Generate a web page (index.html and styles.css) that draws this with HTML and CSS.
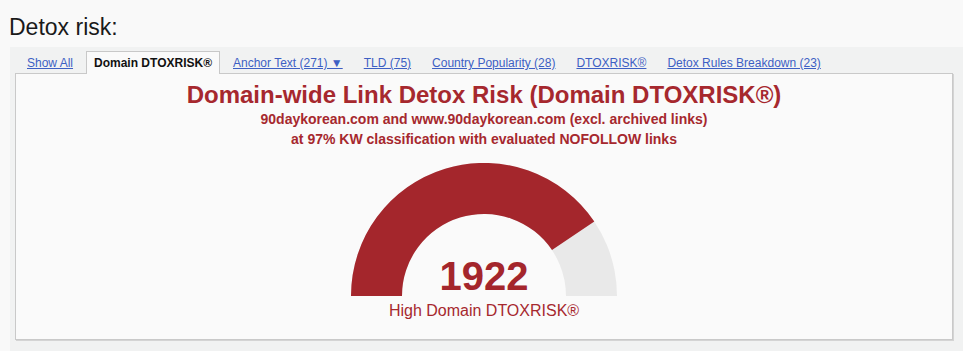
FILE: index.html
```html
<!DOCTYPE html>
<html lang="en">
<head>
<meta charset="utf-8">
<title>Detox risk</title>
<link rel="stylesheet" href="styles.css">
</head>
<body>
<h1 class="page-title">Detox risk:</h1>
<div class="tabs-box">
  <ul class="tab-bar">
    <li class="tab"><a href="#">Show All</a></li>
    <li class="tab active">Domain DTOXRISK®</li>
    <li class="tab"><a href="#">Anchor Text (271) ▼</a></li>
    <li class="tab"><a href="#">TLD (75)</a></li>
    <li class="tab"><a href="#">Country Popularity (28)</a></li>
    <li class="tab"><a href="#">DTOXRISK®</a></li>
    <li class="tab"><a href="#">Detox Rules Breakdown (23)</a></li>
  </ul>
  <div class="panel">
    <h2 class="chart-title">Domain-wide Link Detox Risk (Domain DTOXRISK®)</h2>
    <p class="chart-sub">90daykorean.com and www.90daykorean.com (excl. archived links)<br>at 97% KW classification with evaluated NOFOLLOW links</p>
    <div class="gauge">
      <svg class="gauge-svg" width="266" height="134" viewBox="0 0 266 134">
        <path d="M0 133 A133 133 0 0 1 266 133 L215 133 A82 82 0 0 0 51 133 Z" fill="#e9e9e9"/>
        <path d="M0 133 A133 133 0 0 1 243.3 58.6 L201 87.1 A82 82 0 0 0 51 133 Z" fill="#a4262c"/>
        <text x="133" y="127" text-anchor="middle" class="gauge-value">1922</text>
      </svg>
      <div class="gauge-label">High Domain DTOXRISK®</div>
    </div>
  </div>
</div>
</body>
</html>
```
FILE: styles.css
```css
html, body {
  margin: 0;
  padding: 0;
}
body {
  background: #f9f9f9;
  font-family: "Liberation Sans", Arial, sans-serif;
  color: #111;
  overflow: hidden;
}
.page-title {
  margin: 14px 0 0 9px;
  font-size: 23px;
  font-weight: normal;
  line-height: 26px;
  color: #1a1a1a;
}
.tabs-box {
  margin: 7px 0 0 10px;
  background: #f1f2f2;
  padding: 4px 0 14px 0;
  width: 963px;
}
.tab-bar {
  list-style: none;
  margin: 0 0 -1px 0;
  padding: 0 0 0 9px;
  display: flex;
  position: relative;
  z-index: 1;
}
.tab {
  font-size: 12px;
  line-height: 16px;
  padding: 3px 7px 3px 7px;
  margin-right: 5px;
  border: 1px solid transparent;
  border-bottom: none;
}
.tab a {
  color: #3d5fc4;
  text-decoration: underline;
}
.tab.active {
  font-weight: bold;
  color: #111;
  background: #fafafa;
  border-color: #c8c8c8;
}
.panel {
  margin: 0 0 0 5px;
  width: 936px;
  background: #fafafa;
  border: 1px solid #c9c9c9;
  box-shadow: 1px 1px 0 #d4d4d4;
  padding: 7px 0 18px 0;
  text-align: center;
}
.chart-title {
  margin: 0;
  font-size: 24px;
  line-height: 28px;
  font-weight: bold;
  color: #a6282e;
}
.chart-sub {
  margin: 0;
  font-size: 14px;
  line-height: 20px;
  font-weight: bold;
  color: #a6282e;
}
.gauge {
  margin-top: 14px;
  display: flex;
  flex-direction: column;
  align-items: center;
}
.gauge-svg {
  display: block;
}
.gauge-value {
  font-family: "Liberation Sans", Arial, sans-serif;
  font-size: 40px;
  font-weight: bold;
  fill: #a4262c;
}
.gauge-label {
  margin-top: 4px;
  font-size: 16px;
  line-height: 20px;
  color: #a6282e;
}
```
